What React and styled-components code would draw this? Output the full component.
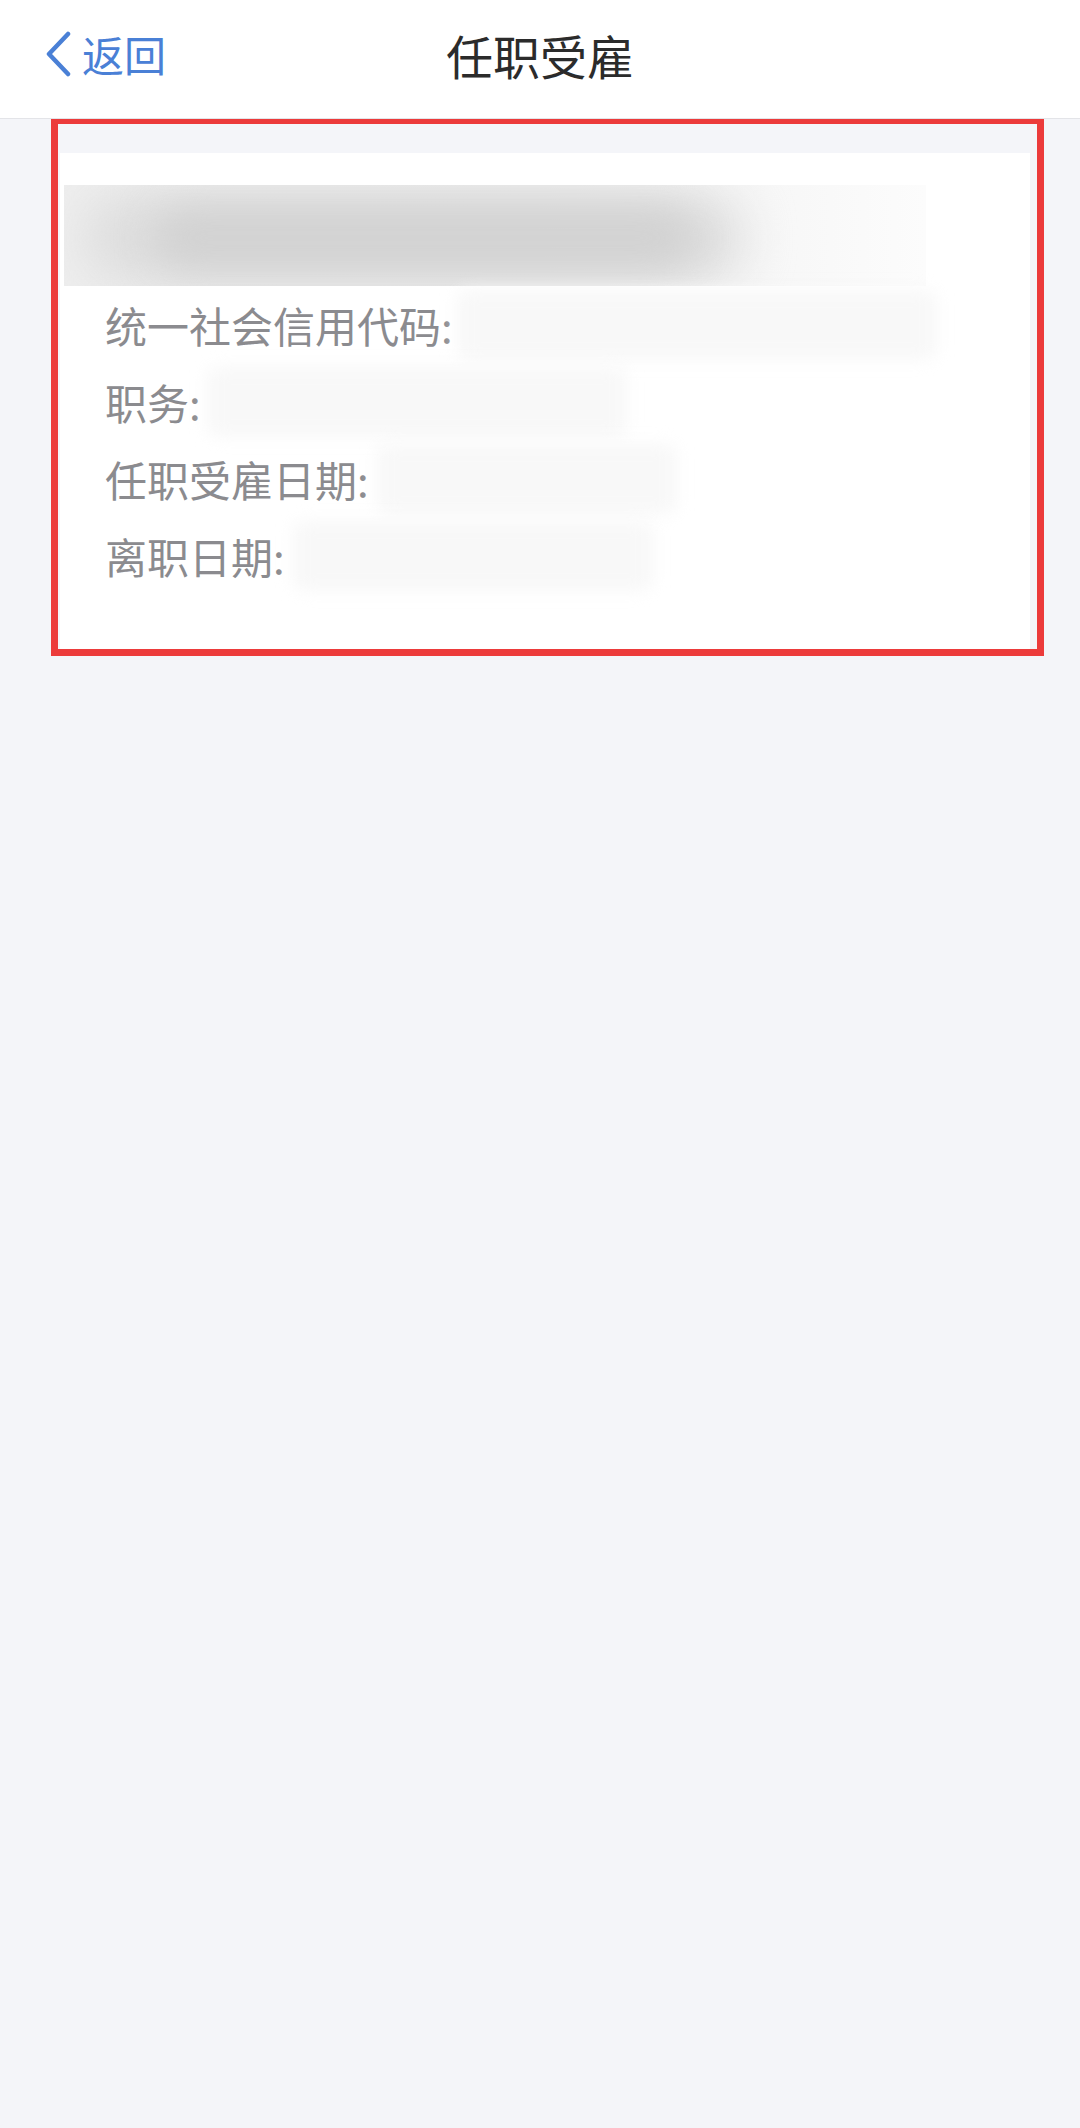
import React from 'react'
import styled, { createGlobalStyle } from 'styled-components'

const GlobalStyle = createGlobalStyle`
  html, body {
    margin: 0;
    padding: 0;
    background: #f4f5f9;
  }
  body {
    font-family: "Noto Sans CJK SC", "Noto Sans", sans-serif;
    min-height: 2128px;
  }
`

const Header = styled.div`
  box-sizing: border-box;
  height: 119px;
  padding-bottom: 10px;
  background: #fff;
  border-bottom: 1px solid #e3e4e8;
  display: flex;
  align-items: center;
  position: relative;
`

const BackButton = styled.div`
  display: flex;
  align-items: center;
  gap: 10px;
  padding-left: 44px;
  color: #4a80d6;
  font-size: 42px;
  line-height: 1;
`

const Title = styled.div`
  position: absolute;
  left: 0;
  right: 0;
  text-align: center;
  font-size: 47px;
  line-height: 1;
  color: #2b2b2b;
  pointer-events: none;
`

const Annotation = styled.div`
  margin: -2px 36px 0 51px;
  border: 7px solid #ec3b3b;
  padding: 29px 7px 0 2px;
`

const Card = styled.div`
  background: #fff;
  padding: 32px 0 55px 4px;
`

const BlurPanel = styled.div`
  height: 101px;
  width: 862px;
  background: linear-gradient(90deg, #eeeeee 0%, #f0f0f0 55%, #f6f6f6 78%, #fcfcfc 100%);
  overflow: hidden;
  position: relative;
`

const BlurBlob = styled.div`
  position: absolute;
  left: ${p => p.$left}px;
  top: ${p => p.$top}px;
  width: ${p => p.$width}px;
  height: ${p => p.$height}px;
  background: ${p => p.$color};
  border-radius: 50px;
  filter: blur(${p => p.$blur}px);
`

const Rows = styled.div`
  display: flex;
  flex-direction: column;
`

const Row = styled.div`
  display: flex;
  align-items: center;
  height: 77px;
`

const Label = styled.span`
  background: #fff;
  padding-left: 41px;
  font-size: 42px;
  line-height: 77px;
  color: #8b8b8f;
  white-space: nowrap;
`

const Redacted = styled.div`
  width: ${p => p.$width}px;
  height: 70px;
  margin-left: ${p => p.$gap}px;
  background: #f8f8f8;
  border-radius: 12px;
  filter: blur(8px);
`

const rows = [
  { label: '统一社会信用代码:', width: 480, gap: 4 },
  { label: '职务:', width: 420, gap: 6 },
  { label: '任职受雇日期:', width: 300, gap: 8 },
  { label: '离职日期:', width: 360, gap: 8 },
]

const Chevron = () => (
  <svg width="28" height="46" viewBox="0 0 28 46">
    <path d="M24 3 L5 23 L24 43" fill="none" stroke="#4a80d6" strokeWidth="4.5" strokeLinecap="round" strokeLinejoin="round" />
  </svg>
)

const App = () => {
  return (
    <>
      <GlobalStyle />
      <Header>
        <BackButton>
          <Chevron />
          <span>返回</span>
        </BackButton>
        <Title>任职受雇</Title>
      </Header>
      <Annotation>
        <Card>
          <BlurPanel>
            <BlurBlob $left={20} $top={8} $width={660} $height={90} $color="#dddddd" $blur={24} />
            <BlurBlob $left={90} $top={22} $width={540} $height={62} $color="#d2d2d2" $blur={18} />
          </BlurPanel>
          <Rows>
            {rows.map((r, i) => (
              <Row key={i}>
                <Label>{r.label}</Label>
                <Redacted $width={r.width} $gap={r.gap} />
              </Row>
            ))}
          </Rows>
        </Card>
      </Annotation>
    </>
  )
}

export default App
